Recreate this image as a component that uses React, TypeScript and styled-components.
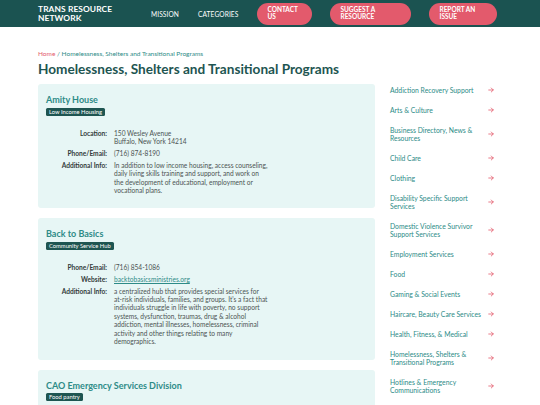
import React from "react";
import styled, { createGlobalStyle } from "styled-components";

const Global = createGlobalStyle`
  html, body { margin: 0; padding: 0; background: #ffffff; }
  body { font-family: Lato, "Open Sans", "Liberation Sans", sans-serif; -webkit-font-smoothing: antialiased; }
  * { box-sizing: border-box; }
`;

const C = {
  header: "#1b5351",
  pink: "#e35a6c",
  dark: "#1e5551",
  teal: "#2d8b87",
  cardBg: "#e7f6f5",
  label: "#333b3a",
  value: "#4c5453",
};

const Header = styled.header`
  height: 27px;
  background: ${C.header};
  display: flex;
  align-items: center;
  padding: 0 38px;
`;

const Logo = styled.div`
  color: #fff;
  font-weight: 700;
  font-size: 8.4px;
  line-height: 9px;
  letter-spacing: 0.1px;
  width: 113px;
  flex: none;
`;

const Nav = styled.nav`
  display: flex;
  gap: 19px;
`;

const NavLink = styled.a`
  color: #fff;
  font-size: 6.6px;
  letter-spacing: 0.1px;
  text-decoration: none;
`;

const Buttons = styled.div`
  display: flex;
  gap: 18px;
  margin-left: 19px;
`;

const PillButton = styled.a<{ $w: number }>`
  width: ${(p) => p.$w}px;
  height: 22px;
  border-radius: 11px;
  background: ${C.pink};
  color: #fff;
  font-weight: 700;
  font-size: 6.5px;
  line-height: 7.6px;
  padding: 3.4px 10px 0;
  text-decoration: none;
`;

const Main = styled.main`
  padding: 0 38px;
`;

const Breadcrumb = styled.div`
  padding-top: 23px;
  font-size: 6.5px;
  line-height: 8px;
  color: ${C.teal};
  a { color: ${C.pink}; text-decoration: none; }
`;

const Title = styled.h1`
  margin: 3px 0 0;
  font-size: 13.6px;
  line-height: 17px;
  font-weight: 700;
  color: ${C.dark};
`;

const Columns = styled.div`
  display: grid;
  grid-template-columns: 337px 1fr;
  column-gap: 15px;
  margin-top: 2px;
`;

const List = styled.div`
  padding-top: 4px;
  display: flex;
  flex-direction: column;
  gap: 10px;
`;

const Card = styled.section`
  background: ${C.cardBg};
  border-radius: 3px;
  padding: 10px 8px 14px;
  display: flex;
  flex-direction: column;
  align-items: flex-start;
`;

const CardTitle = styled.h2`
  margin: 0;
  font-size: 9px;
  line-height: 11px;
  font-weight: 700;
  color: ${C.teal};
`;

const Badge = styled.span`
  margin-top: 2.5px;
  background: ${C.dark};
  color: #fff;
  font-size: 5.8px;
  line-height: 8px;
  padding: 0 3px;
  border-radius: 1.5px;
`;

const Info = styled.dl`
  margin: 13px 0 0;
  display: grid;
  grid-template-columns: 61px auto;
  column-gap: 7px;
  row-gap: 3.5px;
  font-size: 6.6px;
  line-height: 8.4px;
`;

const Label = styled.dt`
  text-align: right;
  font-weight: 700;
  color: ${C.label};
`;

const Value = styled.dd`
  margin: 0;
  color: ${C.value};
  white-space: nowrap;
  a { color: ${C.teal}; text-decoration: underline; }
`;

const Side = styled.ul`
  list-style: none;
  margin: 0;
  padding: 0 8px 0 0;
`;

const SideItem = styled.li`
  display: flex;
  align-items: center;
  justify-content: space-between;
  padding: 6px 0;
  font-size: 6.8px;
  line-height: 8px;
  color: ${C.teal};
`;

const SideText = styled.span`
  max-width: 96px;
`;

const Arrow = () => (
  <svg width="6" height="6" viewBox="0 0 12 12" fill="none" stroke={C.pink} strokeWidth="1.6" strokeLinecap="round" strokeLinejoin="round">
    <path d="M1.5 6h9M6.5 2l4 4-4 4" />
  </svg>
);

const Lines = ({ lines }: { lines: string[] }) => (
  <>
    {lines.map((l, i) => (
      <React.Fragment key={i}>
        {i > 0 && <br />}
        {l}
      </React.Fragment>
    ))}
  </>
);

type Row = { label: string; value: React.ReactNode };
type Resource = { name: string; badge: string; rows: Row[] };

const resources: Resource[] = [
  {
    name: "Amity House",
    badge: "Low Income Housing",
    rows: [
      { label: "Location:", value: <Lines lines={["150 Wesley Avenue", "Buffalo, New York 14214"]} /> },
      { label: "Phone/Email:", value: "(716) 874-8190" },
      {
        label: "Additional Info:",
        value: (
          <Lines
            lines={[
              "In addition to low income housing, access counseling,",
              "daily living skills training and support, and work on",
              "the development of educational, employment or",
              "vocational plans.",
            ]}
          />
        ),
      },
    ],
  },
  {
    name: "Back to Basics",
    badge: "Community Service Hub",
    rows: [
      { label: "Phone/Email:", value: "(716) 854-1086" },
      { label: "Website:", value: <a href="#">backtobasicsministries.org</a> },
      {
        label: "Additional Info:",
        value: (
          <Lines
            lines={[
              "a centralized hub that provides special services for",
              "at-risk individuals, families, and groups. It's a fact that",
              "individuals struggle in life with poverty, no support",
              "systems, dysfunction, traumas, drug & alcohol",
              "addiction, mental illnesses, homelessness, criminal",
              "activity and other things relating to many",
              "demographics.",
            ]}
          />
        ),
      },
    ],
  },
  {
    name: "CAO Emergency Services Division",
    badge: "Food pantry",
    rows: [{ label: "Phone/Email:", value: "(716) 856-3900" }],
  },
];

const categories = [
  "Addiction Recovery Support",
  "Arts & Culture",
  "Business Directory, News & Resources",
  "Child Care",
  "Clothing",
  "Disability Specific Support Services",
  "Domestic Violence Survivor Support Services",
  "Employment Services",
  "Food",
  "Gaming & Social Events",
  "Haircare, Beauty Care Services",
  "Health, Fitness, & Medical",
  "Homelessness, Shelters & Transitional Programs",
  "Hotlines & Emergency Communications",
  "Legal Services",
];

export default function App() {
  return (
    <>
      <Global />
      <Header>
        <Logo>TRANS RESOURCE<br />NETWORK</Logo>
        <Nav>
          <NavLink href="#">MISSION</NavLink>
          <NavLink href="#">CATEGORIES</NavLink>
        </Nav>
        <Buttons>
          <PillButton $w={55} href="#">CONTACT<br />US</PillButton>
          <PillButton $w={81} href="#">SUGGEST A<br />RESOURCE</PillButton>
          <PillButton $w={68} href="#">REPORT AN<br />ISSUE</PillButton>
        </Buttons>
      </Header>
      <Main>
        <Breadcrumb>
          <a href="#">Home</a> / Homelessness, Shelters and Transitional Programs
        </Breadcrumb>
        <Title>Homelessness, Shelters and Transitional Programs</Title>
        <Columns>
          <List>
            {resources.map((r) => (
              <Card key={r.name}>
                <CardTitle>{r.name}</CardTitle>
                <Badge>{r.badge}</Badge>
                <Info>
                  {r.rows.map((row) => (
                    <React.Fragment key={row.label}>
                      <Label>{row.label}</Label>
                      <Value>{row.value}</Value>
                    </React.Fragment>
                  ))}
                </Info>
              </Card>
            ))}
          </List>
          <Side>
            {categories.map((c) => (
              <SideItem key={c}>
                <SideText>{c}</SideText>
                <Arrow />
              </SideItem>
            ))}
          </Side>
        </Columns>
      </Main>
    </>
  );
}
